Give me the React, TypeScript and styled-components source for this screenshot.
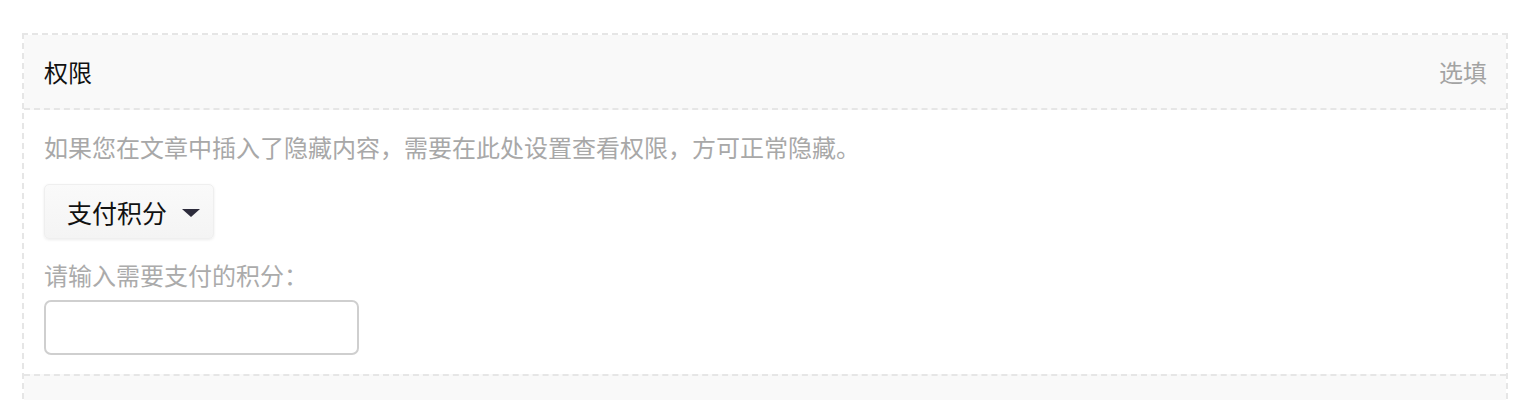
import React, { useState } from "react";
import styled, { createGlobalStyle } from "styled-components";

const GlobalStyle = createGlobalStyle`
  body {
    margin: 0;
    background: #fff;
    font-family: "Noto Sans CJK SC", "Noto Sans", sans-serif;
  }
`;

const Page = styled.div`
  padding: 33px 8px 0 22px;
  height: 400px;
  box-sizing: border-box;
  overflow: hidden;
`;

const Panel = styled.section`
  border: 2px dashed #e6e6e6;
  border-bottom: none;
`;

const Header = styled.div`
  height: 73px;
  display: flex;
  align-items: center;
  justify-content: space-between;
  padding: 0 19px 0 20px;
  background: #f9f9f9;
  border-bottom: 2px dashed #e6e6e6;
  &.next {
    border-top: 2px dashed #e6e6e6;
    border-bottom: none;
  }
`;

const Title = styled.h3`
  margin: 0;
  font-size: 24px;
  font-weight: 400;
  color: #111;
`;

const Optional = styled.span`
  font-size: 24px;
  color: #a3a3a3;
`;

const Body = styled.div`
  padding: 19px 20px 19px 20px;
  display: flex;
  flex-direction: column;
  align-items: flex-start;
`;

const Desc = styled.p`
  margin: 0;
  font-size: 24px;
  line-height: 36px;
  color: #a8a8a8;
`;

const Select = styled.button`
  margin-top: 19px;
  height: 55px;
  width: 170px;
  display: flex;
  align-items: center;
  gap: 15px;
  padding: 0 12px 0 22px;
  font-family: inherit;
  font-size: 25px;
  color: #111;
  background: linear-gradient(#fafafa, #f4f4f4);
  border: 1px solid #efefef;
  border-radius: 5px;
  box-shadow: 0 1px 3px rgba(0, 0, 0, 0.08);
  cursor: pointer;
`;

const Caret = styled.span`
  width: 0;
  height: 0;
  margin-top: 3px;
  border-left: 9px solid transparent;
  border-right: 9px solid transparent;
  border-top: 8px solid #2d2c3c;
`;

const Label = styled.label`
  margin-top: 18px;
  font-size: 24px;
  line-height: 36px;
  color: #ababab;
`;

const Input = styled.input`
  margin-top: 7px;
  width: 315px;
  height: 55px;
  box-sizing: border-box;
  border: 2px solid #cfcfcf;
  border-radius: 7px;
  padding: 0 12px;
  font-size: 22px;
  font-family: inherit;
  outline: none;
`;

const App = () => {
  const [points, setPoints] = useState("");
  return (
    <>
      <GlobalStyle />
      <Page>
        <Panel>
          <Header>
            <Title>权限</Title>
            <Optional>选填</Optional>
          </Header>
          <Body>
            <Desc>如果您在文章中插入了隐藏内容，需要在此处设置查看权限，方可正常隐藏。</Desc>
            <Select>
              支付积分
              <Caret />
            </Select>
            <Label>请输入需要支付的积分：</Label>
            <Input value={points} onChange={(e) => setPoints(e.target.value)} />
          </Body>
          <Header className="next" />
        </Panel>
      </Page>
    </>
  );
};

export default App;
